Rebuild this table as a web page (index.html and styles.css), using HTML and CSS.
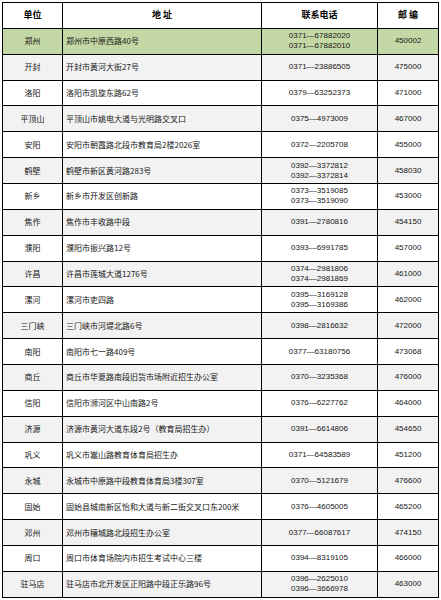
FILE: index.html
```html
<!DOCTYPE html>
<html lang="zh-CN">
<head>
<meta charset="utf-8">
<title>招生办联系方式</title>
<link rel="stylesheet" href="styles.css">
</head>
<body>
<table class="tbl">
  <colgroup>
    <col class="c-unit"><col class="c-addr"><col class="c-tel"><col class="c-zip">
  </colgroup>
  <thead>
    <tr class="head"><th>单位</th><th>地 址</th><th>联系电话</th><th>邮 编</th></tr>
  </thead>
  <tbody>
    <tr class="hl"><td>郑州</td><td class="addr">郑州市中原西路40号</td><td class="num">0371—67882020<br>0371—67882010</td><td class="num">450002</td></tr>
    <tr class="alt"><td>开封</td><td class="addr">开封市黄河大街27号</td><td class="num">0371—23886505</td><td class="num">475000</td></tr>
    <tr><td>洛阳</td><td class="addr">洛阳市凯旋东路62号</td><td class="num">0379—63252373</td><td class="num">471000</td></tr>
    <tr class="alt"><td>平顶山</td><td class="addr">平顶山市姚电大道与光明路交叉口</td><td class="num">0375—4973009</td><td class="num">467000</td></tr>
    <tr><td>安阳</td><td class="addr">安阳市朝霞路北段市教育局2楼2026室</td><td class="num">0372—2205708</td><td class="num">455000</td></tr>
    <tr class="alt"><td>鹤壁</td><td class="addr">鹤壁市新区黄河路283号</td><td class="num">0392—3372812<br>0392—3372814</td><td class="num">458030</td></tr>
    <tr><td>新乡</td><td class="addr">新乡市开发区创新路</td><td class="num">0373—3519085<br>0373—3519090</td><td class="num">453000</td></tr>
    <tr class="alt"><td>焦作</td><td class="addr">焦作市丰收路中段</td><td class="num">0391—2780816</td><td class="num">454150</td></tr>
    <tr><td>濮阳</td><td class="addr">濮阳市振兴路12号</td><td class="num">0393—6991785</td><td class="num">457000</td></tr>
    <tr class="alt"><td>许昌</td><td class="addr">许昌市莲城大道1276号</td><td class="num">0374—2981806<br>0374—2981869</td><td class="num">461000</td></tr>
    <tr><td>漯河</td><td class="addr">漯河市吏四路</td><td class="num">0395—3169128<br>0395—3169386</td><td class="num">462000</td></tr>
    <tr class="alt"><td>三门峡</td><td class="addr">三门峡市河堤北路6号</td><td class="num">0398—2816632</td><td class="num">472000</td></tr>
    <tr><td>南阳</td><td class="addr">南阳市七一路409号</td><td class="num">0377—63180756</td><td class="num">473068</td></tr>
    <tr class="alt"><td>商丘</td><td class="addr">商丘市华夏路南段旧货市场附近招生办公室</td><td class="num">0370—3235368</td><td class="num">476000</td></tr>
    <tr><td>信阳</td><td class="addr">信阳市浉河区中山南路2号</td><td class="num">0376—6227762</td><td class="num">464000</td></tr>
    <tr class="alt"><td>济源</td><td class="addr">济源市黄河大道东段2号（教育局招生办）</td><td class="num">0391—6614806</td><td class="num">454650</td></tr>
    <tr><td>巩义</td><td class="addr">巩义市嵩山路教育体育局招生办</td><td class="num">0371—64583589</td><td class="num">451200</td></tr>
    <tr class="alt"><td>永城</td><td class="addr">永城市中原路中段教育体育局3楼307室</td><td class="num">0370—5121679</td><td class="num">476600</td></tr>
    <tr><td>固始</td><td class="addr">固始县城南新区怡和大道与新二街交叉口东200米</td><td class="num">0376—4605005</td><td class="num">465200</td></tr>
    <tr class="alt"><td>邓州</td><td class="addr">邓州市穰城路北段招生办公室</td><td class="num">0377—66087617</td><td class="num">474150</td></tr>
    <tr><td>周口</td><td class="addr">周口市体育场院内市招生考试中心三楼</td><td class="num">0394—8319105</td><td class="num">466000</td></tr>
    <tr class="alt"><td>驻马店</td><td class="addr">驻马店市北开发区正阳路中段正乐路96号</td><td class="num">0396—2625010<br>0396—3666978</td><td class="num">463000</td></tr>
  </tbody>
</table>
</body>
</html>
```
FILE: styles.css
```css
html, body {
  margin: 0;
  padding: 0;
  background: #ffffff;
}
body {
  padding: 2px 0 0 2px;
  font-family: "Noto Sans CJK SC", "DejaVu Sans", sans-serif;
  font-size: 8px;
  color: #151515;
}
.tbl {
  border-collapse: collapse;
  table-layout: fixed;
  width: 436px;
}
.c-unit { width: 60px; }
.c-addr { width: 199px; }
.c-tel { width: 116px; }
.c-zip { width: 61px; }
.tbl th, .tbl td {
  border: 1px solid #000000;
  padding: 0;
  text-align: center;
  vertical-align: middle;
  line-height: 12px;
  white-space: nowrap;
  overflow: hidden;
}
.tbl tr {
  height: 25.87px;
}
.tbl th {
  font-weight: bold;
  font-size: 9px;
  color: #000000;
}
.tbl td.addr {
  text-align: left;
  padding-left: 3px;
}
.tbl td.num {
  font-family: "Liberation Sans", "DejaVu Sans", sans-serif;
  font-size: 8px;
  line-height: 10px;
}
.hl { background: #c4d8a6; }
.alt { background: #f2f2f2; }
```
